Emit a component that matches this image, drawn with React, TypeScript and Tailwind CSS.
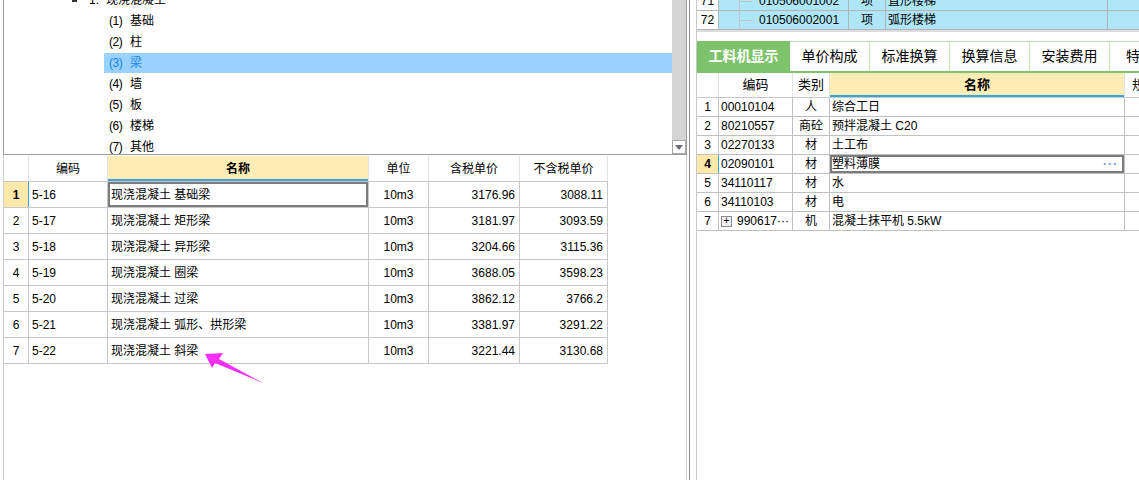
import React from "react";

const treeItems = [
  { n: "(1)", t: "基础" },
  { n: "(2)", t: "柱" },
  { n: "(3)", t: "梁", sel: true },
  { n: "(4)", t: "墙" },
  { n: "(5)", t: "板" },
  { n: "(6)", t: "楼梯" },
  { n: "(7)", t: "其他" },
];

const quotaRows = [
  ["5-16", "现浇混凝土 基础梁", "10m3", "3176.96", "3088.11"],
  ["5-17", "现浇混凝土 矩形梁", "10m3", "3181.97", "3093.59"],
  ["5-18", "现浇混凝土 异形梁", "10m3", "3204.66", "3115.36"],
  ["5-19", "现浇混凝土 圈梁", "10m3", "3688.05", "3598.23"],
  ["5-20", "现浇混凝土 过梁", "10m3", "3862.12", "3766.2"],
  ["5-21", "现浇混凝土 弧形、拱形梁", "10m3", "3381.97", "3291.22"],
  ["5-22", "现浇混凝土 斜梁", "10m3", "3221.44", "3130.68"],
];

const materialRows = [
  ["00010104", "人", "综合工日"],
  ["80210557", "商砼", "预拌混凝土 C20"],
  ["02270133", "材", "土工布"],
  ["02090101", "材", "塑料薄膜"],
  ["34110117", "材", "水"],
  ["34110103", "材", "电"],
  ["990617···", "机", "混凝土抹平机 5.5kW"],
];

const tabs = ["工料机显示", "单价构成", "标准换算", "换算信息", "安装费用", "特"];

function TreePanel() {
  return (
    <div className="flex h-[155px] border-l border-r border-b border-[#9a9a9a]">
      <div className="flex-1 overflow-hidden">
        <div className="-mt-[11px]">
          <div className="flex h-[21px] items-center pl-[68px]">
            <span className="mr-[12px] block h-[5px] w-[5px] bg-[#333]" />
            <span className="w-[17px]">1.</span>
            <span>现浇混凝土</span>
          </div>
          {treeItems.map((it) => (
            <div key={it.n} className="flex h-[21px] items-center pl-[100px]">
              <div
                className={
                  it.sel
                    ? "flex h-[20px] flex-1 items-center bg-[#99d1ff] pl-[5px] text-[#1a86e8]"
                    : "flex h-[20px] flex-1 items-center pl-[5px]"
                }
              >
                <span className="w-[21px] tracking-[-0.5px]">{it.n}</span>
                <span>{it.t}</span>
              </div>
            </div>
          ))}
        </div>
      </div>
      <div className="flex w-[14px] flex-col justify-end bg-[#d4d4d4]">
        <div className="flex h-[14px] items-center justify-center border border-[#a8a8a8] bg-white">
          <svg width="8" height="5" viewBox="0 0 8 5">
            <path d="M0 0H8L4 5Z" fill="#6b6b78" />
          </svg>
        </div>
      </div>
    </div>
  );
}

function QuotaTable() {
  return (
    <div className="flex-1 border-l border-r border-[#cfcfcf] pt-px">
      <div className="flex h-[26px] w-[604px] border-b border-[#c8c8c8]">
        <div className="w-[25px] border-r border-[#e2e2e2]" />
        <div className="flex w-[79px] items-center justify-center border-r border-[#e2e2e2]">编码</div>
        <div className="flex w-[261px] items-center justify-center border-r border-[#e2e2e2] bg-[#ffedb5] font-bold shadow-[inset_0_-2px_0_#3aa3da]">
          名称
        </div>
        <div className="flex w-[60px] items-center justify-center border-r border-[#e2e2e2]">单位</div>
        <div className="flex w-[91px] items-center justify-center border-r border-[#e2e2e2]">含税单价</div>
        <div className="flex w-[88px] items-center justify-center border-r border-[#e2e2e2]">不含税单价</div>
      </div>
      {quotaRows.map((r, i) => (
        <div key={r[0]} className="flex h-[26px] w-[604px] border-b border-[#c8c8c8]">
          <div
            className={
              i === 0
                ? "flex w-[25px] items-center justify-center border-r border-[#3aa3da] bg-[#ffe9aa] font-bold"
                : "flex w-[25px] items-center justify-center border-r border-[#c8c8c8]"
            }
          >
            {i + 1}
          </div>
          <div className="flex w-[79px] items-center border-r border-[#c8c8c8] pl-[3px]">{r[0]}</div>
          <div
            className={
              i === 0
                ? "flex w-[261px] items-center border-r border-[#c8c8c8] pl-[3px] shadow-[inset_0_0_0_2px_#7c7c7c]"
                : "flex w-[261px] items-center border-r border-[#c8c8c8] pl-[3px]"
            }
          >
            {r[1]}
          </div>
          <div className="flex w-[60px] items-center justify-center border-r border-[#c8c8c8]">{r[2]}</div>
          <div className="flex w-[91px] items-center justify-end border-r border-[#c8c8c8] pr-[4px]">{r[3]}</div>
          <div className="flex w-[88px] items-center justify-end border-r border-[#c8c8c8] pr-[4px]">{r[4]}</div>
        </div>
      ))}
    </div>
  );
}

function BillRows() {
  const rows = [
    ["71", "010506001002", "直形楼梯"],
    ["72", "010506002001", "弧形楼梯"],
  ];
  return (
    <div className="h-[32px] overflow-hidden border-b-2 border-[#dcdcdc]">
      <div className="-mt-[8px]">
        {rows.map((r) => (
          <div key={r[0]} className="flex h-[19px] border-b border-[#b4b4b4]">
            <div className="flex w-[22px] shrink-0 items-center justify-center border-r border-[#b4b4b4] bg-white">{r[0]}</div>
            <div className="relative flex w-[130px] shrink-0 items-center border-r border-[#b4b4b4] bg-[#aee6f8] pl-[40px]">
              <span className="absolute left-[20px] top-0 h-[19px] w-px bg-[#c4c4c4]" />
              <span className="absolute left-[20px] top-[9px] h-px w-[13px] bg-[#c4c4c4]" />
              {r[1]}
            </div>
            <div className="flex w-[37px] shrink-0 items-center justify-center border-r border-[#b4b4b4] bg-[#aee6f8]">项</div>
            <div className="flex w-[222px] shrink-0 items-center border-r border-[#b4b4b4] bg-[#aee6f8] pl-[2px]">{r[2]}</div>
            <div className="flex-1 bg-[#aee6f8]" />
          </div>
        ))}
      </div>
    </div>
  );
}

function Tabs() {
  return (
    <div className="mt-[9px] flex h-[32px] border-b-2 border-[#7dc36b]">
      {tabs.map((t, i) => (
        <div
          key={t}
          className={
            i === 0
              ? "flex w-[93px] shrink-0 items-center justify-center bg-[#7dc36b] text-[14px] font-bold text-white"
              : i === 5
              ? "flex min-w-0 flex-1 items-center border-t border-[#c4e2b6] pl-[16px] text-[14px]"
              : "flex w-[80px] shrink-0 items-center justify-center border-t border-r border-[#c4e2b6] text-[14px]"
          }
        >
          {t}
        </div>
      ))}
    </div>
  );
}

function MaterialTable() {
  return (
    <div>
      <div className="flex h-[25px] border-b border-[#c8c8c8]">
        <div className="w-[22px] shrink-0 border-r border-[#e0e0e0]" />
        <div className="flex w-[74px] shrink-0 items-center justify-center border-r border-[#e0e0e0] text-[13px]">编码</div>
        <div className="flex w-[37px] shrink-0 items-center justify-center border-r border-[#e0e0e0] text-[13px]">类别</div>
        <div className="flex w-[295px] shrink-0 items-center justify-center border-r border-[#e0e0e0] bg-[#ffedb5] text-[13px] font-bold shadow-[inset_0_-2px_0_#3aa3da]">
          名称
        </div>
        <div className="flex min-w-0 flex-1 items-center pl-[7px] text-[13px]">规</div>
      </div>
      {materialRows.map((r, i) => (
        <div key={r[0]} className="flex h-[19px] border-b border-[#c0c0c0]">
          <div
            className={
              i === 3
                ? "flex w-[22px] shrink-0 items-center justify-center border-r border-[#3aa3da] bg-[#ffe9aa] font-bold"
                : "flex w-[22px] shrink-0 items-center justify-center border-r border-[#c0c0c0]"
            }
          >
            {i + 1}
          </div>
          <div className="flex w-[74px] shrink-0 items-center border-r border-[#c0c0c0] pl-[2px]">
            {i === 6 && (
              <span className="mr-[5px] flex h-[11px] w-[11px] items-center justify-center border border-[#8a8a8a] bg-[#f0f0f0] text-[10px] leading-none">
                +
              </span>
            )}
            {r[0]}
          </div>
          <div className="flex w-[37px] shrink-0 items-center justify-center border-r border-[#c0c0c0]">{r[1]}</div>
          <div
            className={
              i === 3
                ? "flex w-[295px] shrink-0 items-center justify-between border-r border-[#c0c0c0] pl-[2px] pr-[6px] shadow-[inset_0_0_0_2px_#7c7c7c]"
                : "flex w-[295px] shrink-0 items-center border-r border-[#c0c0c0] pl-[2px]"
            }
          >
            <span>{r[2]}</span>
            {i === 3 && <span className="font-bold tracking-[1px] text-[#6aa6e0]">···</span>}
          </div>
          <div className="min-w-0 flex-1" />
        </div>
      ))}
    </div>
  );
}

export default function App() {
  return (
    <div className="relative flex h-[480px] w-[1139px] overflow-hidden bg-white font-['Liberation_Sans','Noto_Sans_CJK_SC',sans-serif] text-[12px] text-black">
      {/* left: chapter tree + quota list */}
      <div className="flex w-[687px] shrink-0 flex-col pl-[3px]">
        <TreePanel />
        <QuotaTable />
      </div>

      {/* splitter */}
      <div className="flex w-[9px] shrink-0 pl-[2px]">
        <div className="w-px bg-[#8a8a8a]" />
      </div>

      {/* right: bill rows + resource tabs */}
      <div className="flex min-w-0 flex-1 flex-col overflow-hidden border-l border-[#c8c8c8]">
        <BillRows />
        <Tabs />
        <MaterialTable />
      </div>

      {/* annotation arrow */}
      <svg className="pointer-events-none absolute left-0 top-0" width="1139" height="480">
        <polygon points="205,354 223,353 219,359 263,383 215,363 212,368" fill="#f52ff5" />
      </svg>
    </div>
  );
}
